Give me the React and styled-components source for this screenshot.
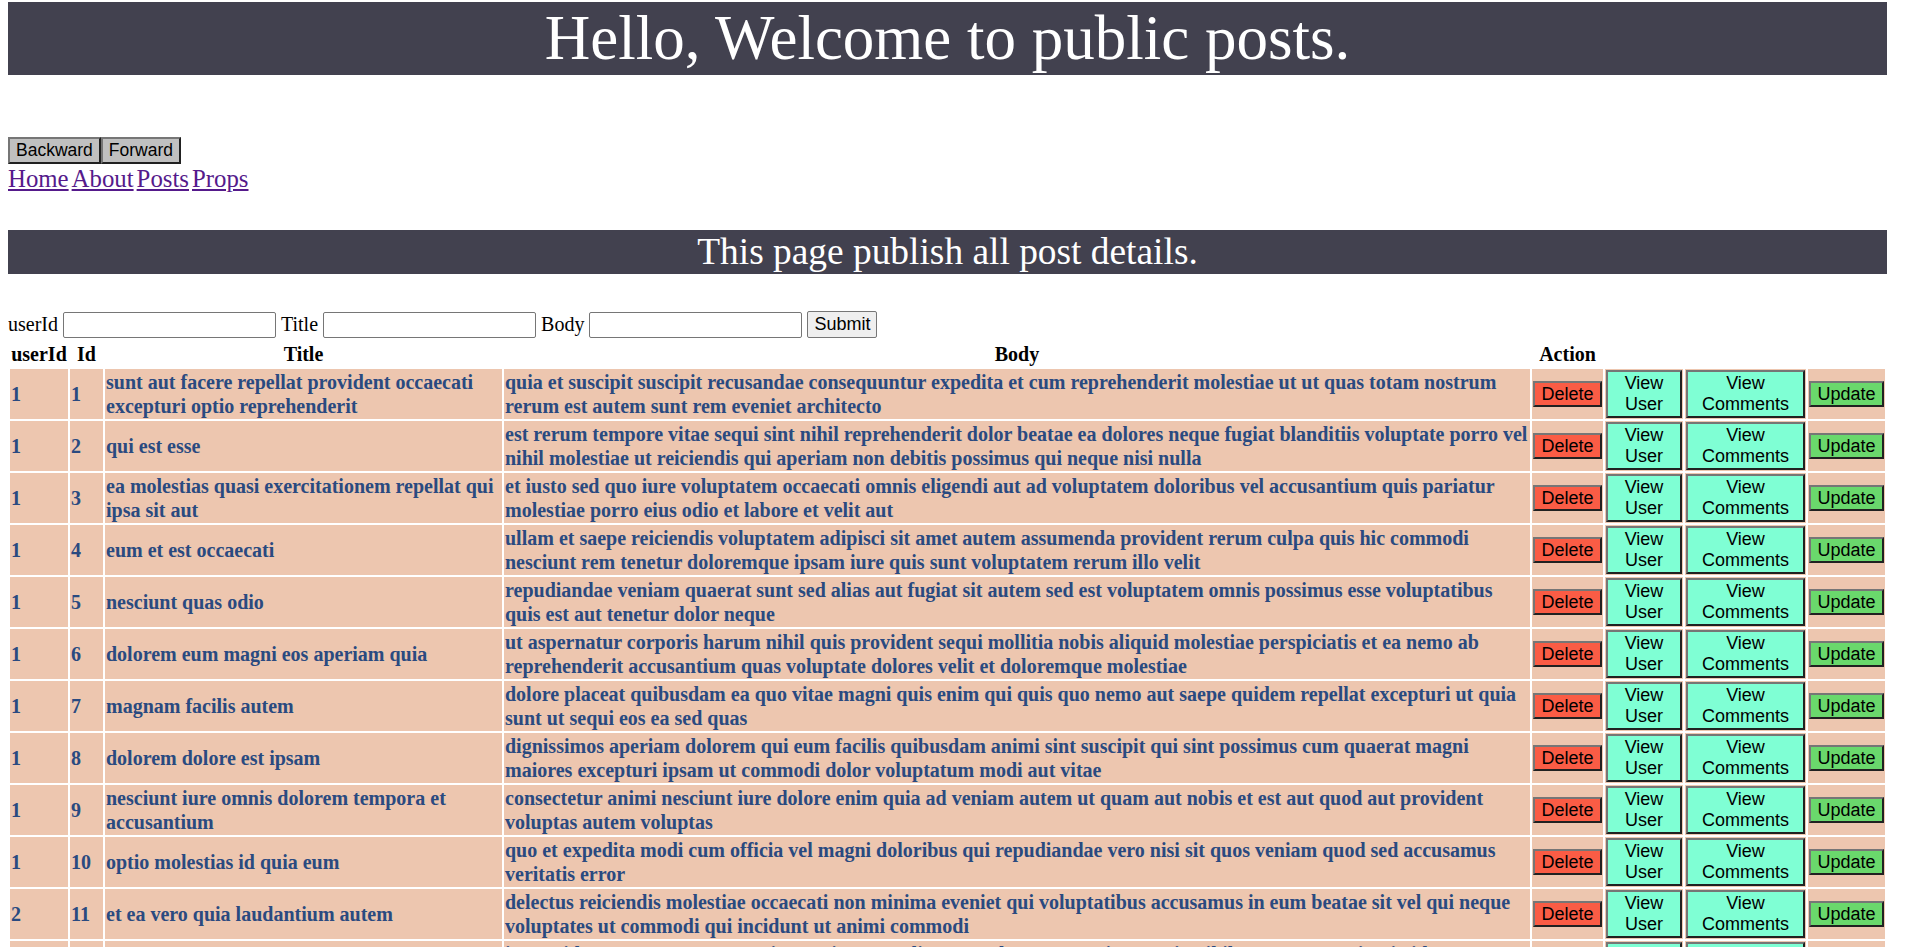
import React from "react";
import styled, { createGlobalStyle } from "styled-components";

const GlobalStyle = createGlobalStyle`
  html { overflow-y: scroll; }
  body {
    margin: 2px 8px 8px 8px;
    font-family: "Liberation Serif", "Times New Roman", serif;
    background: #ffffff;
    color: #000000;
  }
  ::-webkit-scrollbar { width: 21px; }
  ::-webkit-scrollbar-track { background: #f1f1f1; }
  ::-webkit-scrollbar-thumb { background: #c1c1c1; border: 2px solid #f1f1f1; }
`;

const posts = [
  [1, 1, "sunt aut facere repellat provident occaecati excepturi optio reprehenderit", "quia et suscipit suscipit recusandae consequuntur expedita et cum reprehenderit molestiae ut ut quas totam nostrum rerum est autem sunt rem eveniet architecto"],
  [1, 2, "qui est esse", "est rerum tempore vitae sequi sint nihil reprehenderit dolor beatae ea dolores neque fugiat blanditiis voluptate porro vel nihil molestiae ut reiciendis qui aperiam non debitis possimus qui neque nisi nulla"],
  [1, 3, "ea molestias quasi exercitationem repellat qui ipsa sit aut", "et iusto sed quo iure voluptatem occaecati omnis eligendi aut ad voluptatem doloribus vel accusantium quis pariatur molestiae porro eius odio et labore et velit aut"],
  [1, 4, "eum et est occaecati", "ullam et saepe reiciendis voluptatem adipisci sit amet autem assumenda provident rerum culpa quis hic commodi nesciunt rem tenetur doloremque ipsam iure quis sunt voluptatem rerum illo velit"],
  [1, 5, "nesciunt quas odio", "repudiandae veniam quaerat sunt sed alias aut fugiat sit autem sed est voluptatem omnis possimus esse voluptatibus quis est aut tenetur dolor neque"],
  [1, 6, "dolorem eum magni eos aperiam quia", "ut aspernatur corporis harum nihil quis provident sequi mollitia nobis aliquid molestiae perspiciatis et ea nemo ab reprehenderit accusantium quas voluptate dolores velit et doloremque molestiae"],
  [1, 7, "magnam facilis autem", "dolore placeat quibusdam ea quo vitae magni quis enim qui quis quo nemo aut saepe quidem repellat excepturi ut quia sunt ut sequi eos ea sed quas"],
  [1, 8, "dolorem dolore est ipsam", "dignissimos aperiam dolorem qui eum facilis quibusdam animi sint suscipit qui sint possimus cum quaerat magni maiores excepturi ipsam ut commodi dolor voluptatum modi aut vitae"],
  [1, 9, "nesciunt iure omnis dolorem tempora et accusantium", "consectetur animi nesciunt iure dolore enim quia ad veniam autem ut quam aut nobis et est aut quod aut provident voluptas autem voluptas"],
  [1, 10, "optio molestias id quia eum", "quo et expedita modi cum officia vel magni doloribus qui repudiandae vero nisi sit quos veniam quod sed accusamus veritatis error"],
  [2, 11, "et ea vero quia laudantium autem", "delectus reiciendis molestiae occaecati non minima eveniet qui voluptatibus accusamus in eum beatae sit vel qui neque voluptates ut commodi qui incidunt ut animi commodi"],
  [2, 12, "in quibusdam tempore odit est dolorem", "itaque id aut magnam praesentium quia et ea odit et ea voluptas et sapiente quia nihil amet occaecati quia id voluptatem incidunt ea est distinctio odio"],
  [2, 13, "dolorum ut in voluptas mollitia et saepe quo animi", "aut dicta possimus sint mollitia voluptas commodi quo doloremque iste corrupti reiciendis voluptatem eius rerum sit cumque quod eligendi laborum minima perferendis recusandae assumenda consectetur porro architecto ipsum ipsam"],
  [2, 14, "voluptatem eligendi optio", "fuga et accusamus dolorum perferendis illo voluptas non doloremque neque facere ad qui dolorum molestiae beatae sed aut voluptas totam sit illum"],
  [2, 15, "eveniet quod temporibus", "reprehenderit quos placeat velit minima officia dolores impedit repudiandae molestiae nam voluptas recusandae quis delectus officiis harum fugiat vitae"],
];

const columnWidths = [58, 33, 397, 1026, 71, 78, 121, 77];

const Page = styled.div`
  width: calc(100vw - 39px);
`;

const Banner = styled.h1`
  margin: 0;
  background: #42414f;
  color: #ffffff;
  text-align: center;
  font-weight: normal;
  font-size: 63px;
  line-height: 73px;
`;

const SubBanner = styled.h2`
  margin: 37px 0 0 0;
  background: #42414f;
  color: #ffffff;
  text-align: center;
  font-weight: normal;
  font-size: 37.4px;
  line-height: 44px;
`;

const HistoryBar = styled.div`
  display: flex;
  margin-top: 62px;
`;

const HistoryButton = styled.button`
  font-family: "Liberation Sans", Arial, sans-serif;
  font-size: 17.5px;
  padding: 1px 6px;
  background: #c0c0c0;
  color: #000000;
  border: 2px outset #767676;
`;

const LinkBar = styled.nav`
  display: flex;
  gap: 3px;
  font-size: 24.8px;
  line-height: 29px;
`;

const NavLink = styled.a`
  color: #551a8b;
  text-decoration: underline;
`;

const PostForm = styled.form`
  display: flex;
  align-items: center;
  gap: 5px;
  height: 31px;
  margin-top: 35px;
  font-size: 20px;
`;

const FieldLabel = styled.label``;

const TextField = styled.input`
  box-sizing: border-box;
  width: 213px;
  height: 26px;
  border: 1px solid #767676;
  border-radius: 2px;
  padding: 1px 2px;
  background: #ffffff;
`;

const SubmitButton = styled.button`
  height: 27px;
  padding: 1px 6px;
  font-family: "Liberation Sans", Arial, sans-serif;
  font-size: 18px;
  color: #000000;
  background: #efefef;
  border: 1px solid #767676;
  border-radius: 2px;
`;

const PostTable = styled.table`
  table-layout: fixed;
  width: 100%;
  border-spacing: 2px;
  font-size: 20px;
`;

const HeadCell = styled.th`
  padding: 1px;
  line-height: 23px;
  font-weight: bold;
  color: #000000;
  text-align: center;
`;

const Cell = styled.td`
  padding: 1px;
  background: #edc6af;
  color: #2a4a80;
  font-weight: bold;
  line-height: 24px;
  vertical-align: middle;
  text-align: ${(p) => (p.$action ? "center" : "left")};
`;

const ActionButton = styled.button`
  font-family: "Liberation Sans", Arial, sans-serif;
  font-size: 18px;
  line-height: 20.7px;
  padding: 1px 6px;
  color: #000000;
  background: ${(p) => p.$tone};
  border: 2px outset #767676;
`;

const tones = {
  delete: "#fa5c45",
  view: "#7fffd4",
  update: "#6ad86c",
};

export default function App() {
  return (
    <>
      <GlobalStyle />
      <Page>
        <Banner>Hello, Welcome to public posts.</Banner>
        <HistoryBar>
          <HistoryButton type="button">Backward</HistoryButton>
          <HistoryButton type="button">Forward</HistoryButton>
        </HistoryBar>
        <LinkBar>
          <NavLink href="#home">Home</NavLink>
          <NavLink href="#about">About</NavLink>
          <NavLink href="#posts">Posts</NavLink>
          <NavLink href="#props">Props</NavLink>
        </LinkBar>
        <SubBanner>This page publish all post details.</SubBanner>
        <PostForm onSubmit={(e) => e.preventDefault()}>
          <FieldLabel>userId</FieldLabel>
          <TextField type="text" />
          <FieldLabel>Title</FieldLabel>
          <TextField type="text" />
          <FieldLabel>Body</FieldLabel>
          <TextField type="text" />
          <SubmitButton type="submit">Submit</SubmitButton>
        </PostForm>
        <PostTable>
          <colgroup>
            {columnWidths.map((w, i) => (
              <col key={i} style={{ width: w }} />
            ))}
          </colgroup>
          <thead>
            <tr>
              <HeadCell>userId</HeadCell>
              <HeadCell>Id</HeadCell>
              <HeadCell>Title</HeadCell>
              <HeadCell>Body</HeadCell>
              <HeadCell>Action</HeadCell>
            </tr>
          </thead>
          <tbody>
            {posts.map(([userId, id, title, body]) => (
              <tr key={id}>
                <Cell>{userId}</Cell>
                <Cell>{id}</Cell>
                <Cell>{title}</Cell>
                <Cell>{body}</Cell>
                <Cell $action>
                  <ActionButton $tone={tones.delete}>Delete</ActionButton>
                </Cell>
                <Cell $action>
                  <ActionButton $tone={tones.view}>View User</ActionButton>
                </Cell>
                <Cell $action>
                  <ActionButton $tone={tones.view}>View Comments</ActionButton>
                </Cell>
                <Cell $action>
                  <ActionButton $tone={tones.update}>Update</ActionButton>
                </Cell>
              </tr>
            ))}
          </tbody>
        </PostTable>
      </Page>
    </>
  );
}
